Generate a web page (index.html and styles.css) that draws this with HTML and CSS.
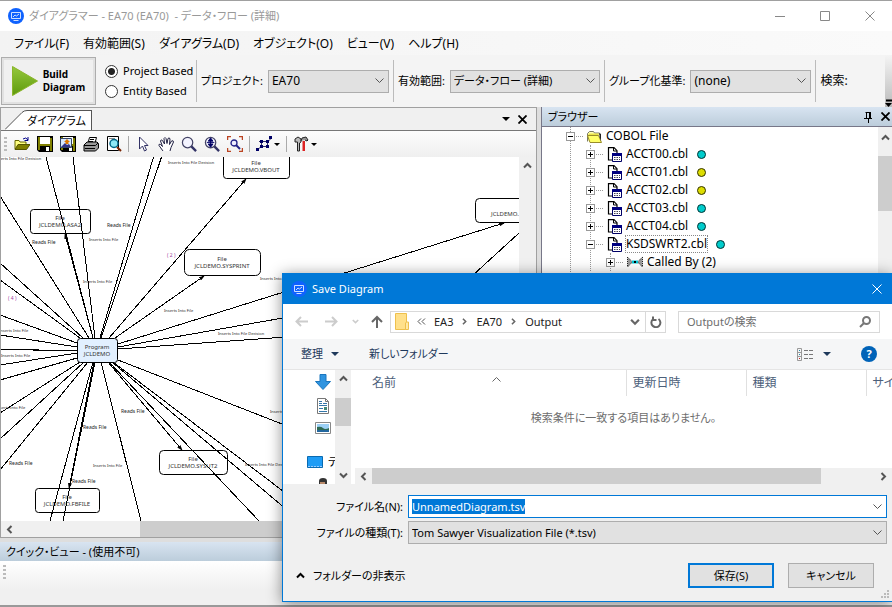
FILE: index.html
```html
<!DOCTYPE html>
<html lang="ja">
<head>
<meta charset="UTF-8">
<meta name="viewport" content="width=device-width,initial-scale=1">
<title>ダイアグラマー - EA70</title>
<link rel="stylesheet" href="styles.css">
</head>
<body>

<!-- 共通アイコン -->
<svg class="defs" width="0" height="0" aria-hidden="true">
  <symbol id="i-app" viewBox="0 0 16 16">
    <circle cx="8" cy="8" r="8" fill="#0f62fe"/>
    <path d="M3.5 4.500h9v6h-9zM5.500 12.500h5M5 9l2-2 1.500 1L11 6" fill="none" stroke="#cfe0ff"/>
  </symbol>
  <symbol id="i-x" viewBox="0 0 10 10"><path d="M0.500 0.500l9 9M9.500 0.500l-9 9" fill="none" stroke="currentColor" stroke-width="var(--sw,1)"/></symbol>
  <symbol id="i-up" viewBox="0 0 9 9"><path d="M1 6.500L4.500 3 8 6.500" fill="none" stroke="currentColor" stroke-width="2"/></symbol>
  <symbol id="i-down" viewBox="0 0 9 9"><path d="M1 2.500L4.500 6 8 2.500" fill="none" stroke="currentColor" stroke-width="2"/></symbol>
  <symbol id="i-left" viewBox="0 0 9 9"><path d="M6.500 1L3 4.500 6.500 8" fill="none" stroke="currentColor" stroke-width="2"/></symbol>
  <symbol id="i-right" viewBox="0 0 9 9"><path d="M2.500 1L6 4.500 2.500 8" fill="none" stroke="currentColor" stroke-width="2"/></symbol>
  <symbol id="i-tri" viewBox="0 0 8 4"><path d="M0 0h8L4 4z" fill="currentColor"/></symbol>
  <symbol id="i-doc" viewBox="0 0 15 15">
    <path d="M1.500 0.700h5.500l3 3V13h-8.500z" fill="#fff" stroke="#000" stroke-width="1.200"/>
    <path d="M6.500 1v3h3.500" fill="none" stroke="#000"/>
    <path d="M5.500 6.500h9v8h-9z" fill="#fff" stroke="#000066"/>
    <path d="M5 6h10v3H5z" fill="#000080"/>
    <path d="M7 10.500h6M7 12.500h6" stroke="#445" stroke-dasharray="1.500 1"/>
  </symbol>
  <symbol id="i-floppy" viewBox="0 0 16 16">
    <path d="M0 0h16v16H2L0 14z" fill="#000"/>
    <path d="M1 1h2v13H1zM13 2h2v13h-2z" fill="#808000"/>
    <path d="M3 1h10v7H3z" fill="#fff"/><path d="M1 8h14v2H1z" fill="#808000"/>
    <path d="M9 11h3v4H9z" fill="#fff"/>
  </symbol>
  <symbol id="i-lens" viewBox="0 0 17 17">
    <circle cx="7" cy="7" r="5.500" fill="#f4f4ff" stroke="#446" stroke-width="1.300"/>
    <path d="M11 11l5 5" stroke="#336" stroke-width="2.500"/>
  </symbol>
</svg>

<!-- ===== タイトルバー ===== -->
<header class="titlebar">
  <svg class="app-icon"><use href="#i-app"/></svg>
  <h1>ダイアグラマー - EA70 (EA70) &nbsp;- データ・フロー (詳細)</h1>
  <div class="winbtns">
    <button aria-label="最小化"><svg width="10" height="10"><path d="M0 5.500h10" stroke="currentColor"/></svg></button>
    <button aria-label="最大化"><svg width="10" height="10"><path d="M.5.5h9v9h-9z" fill="none" stroke="currentColor"/></svg></button>
    <button aria-label="閉じる"><svg width="10" height="10"><use href="#i-x"/></svg></button>
  </div>
</header>

<nav class="menubar">
  <button>ファイル(F)</button>
  <button>有効範囲(S)</button>
  <button>ダイアグラム(D)</button>
  <button>オブジェクト(O)</button>
  <button>ビュー(V)</button>
  <button>ヘルプ(H)</button>
</nav>

<!-- ===== メインツールバー ===== -->
<div class="toolbar">
  <button class="build">
    <svg width="26" height="30" viewBox="0 0 26 30"><defs><linearGradient id="g" x2="0" y2="1"><stop stop-color="#94c83d"/><stop offset="1" stop-color="#5f9a0c"/></linearGradient></defs><path d="M.5.5L25.500 15 .5 29.500z" fill="url(#g)" stroke="#8ab52a"/></svg>
    <span>Build<br>Diagram</span>
  </button>
  <div class="radios">
    <label><input type="radio" name="base" checked>Project Based</label>
    <label><input type="radio" name="base">Entity Based</label>
  </div>
  <div class="field f-mid"><label for="project">プロジェクト:</label><select id="project"><option>EA70</option></select></div>
  <div class="field f-wide"><label for="scope">有効範囲:</label><select id="scope"><option>データ・フロー (詳細)</option></select></div>
  <div class="field f-mid"><label for="group">グループ化基準:</label><select id="group"><option>(none)</option></select></div>
  <div class="field last"><span>検索:</span></div>
  <button class="more" aria-label="その他"><svg width="7" height="8"><path d="M1 1.500h6" stroke="#000" stroke-width="2"/><path d="M0 4h7L3.500 8z"/></svg></button>
</div>

<main class="workspace">
  <!-- ===== ダイアグラム ===== -->
  <section class="diagram">
    <div class="tabstrip">
      <svg class="slope" width="22" height="20"><path d="M0 19.500L17 2.500Q19 .5 22 .5V20H0z" fill="#fff"/><path d="M0 19.500L17 2.500Q19 .5 22 .5" fill="none" stroke="#555"/></svg>
      <button class="tab">ダイアグラム</button>
      <div class="strip-btns">
        <button aria-label="一覧"><svg width="8" height="4"><use href="#i-tri"/></svg></button>
        <button aria-label="タブを閉じる"><svg class="bold" width="9" height="9"><use href="#i-x"/></svg></button>
      </div>
    </div>
    <div class="tools">
      <i class="grip"></i>
      <button aria-label="開く"><svg viewBox="0 0 16 16"><path d="M1 4.500h4l1 1.500h6v7H1z" fill="#ffff80" stroke="#660"/><path d="M1 13.500L4 8.500h12l-3.500 5z" fill="#808000" stroke="#550"/><path d="M9 3q3-2.500 5 1m0-3v3.500h-3.500" fill="none" stroke="#008"/></svg></button>
      <button aria-label="保存"><svg><use href="#i-floppy"/></svg></button>
      <button aria-label="画像として保存"><svg viewBox="0 0 16 16"><use href="#i-floppy" width="16" height="16"/><path d="M.5 2.500h11v9H.5z" fill="#d7e8ff" stroke="#346"/><path d="M1 11l4-4 2 2 2-1 2 3z" fill="#338"/><path d="M7 3l3 3H8.500v2h-3V6H4z" fill="#d70"/></svg></button>
      <button aria-label="印刷"><svg viewBox="0 0 16 16"><path d="M5 7l1.500-5.500h7L12 7z" fill="#fff" stroke="#000"/><path d="M1 9l3-3h10l1.500 1.500V12l-3 3H1z" fill="#999" stroke="#000"/><path d="M1 9.500h11.500L15 7M2 12.500h10M7 3.500h4M6 5.500h4" fill="none" stroke="#000"/></svg></button>
      <button aria-label="印刷プレビュー"><svg viewBox="0 0 16 16"><path d="M1.500.5h11v14h-11z" fill="#fff" stroke="#000"/><path d="M3 2.500h6" stroke="#888"/><circle cx="8" cy="7.500" r="4" fill="#8ee8f5" stroke="#068" stroke-width="1.500"/><path d="M11 11l4 4" stroke="#720" stroke-width="2"/></svg></button>
      <i class="sep"></i>
      <button aria-label="選択"><svg viewBox="0 0 16 16"><path d="M4.500 1v12l3-3 2 5 2-1-2-4.500h3.500z" fill="#fff" stroke="#336"/></svg></button>
      <button aria-label="手のひら"><svg viewBox="0 0 16 16"><path d="M5 15L1 9.500Q.5 7.500 2.500 8.500L4.500 10.500 2.500 5Q3 3 4.500 4.500L6.500 8 6 2.500Q7 .5 8 2.500L9 7.500 10 2.500Q11.500 1 12 3L11.500 8.500 13.500 5Q15.500 4 15.500 6L13 11.500 12 15" fill="#fff" stroke="#224"/></svg></button>
      <button aria-label="ズーム"><svg><use href="#i-lens"/></svg></button>
      <button aria-label="対話ズーム"><svg viewBox="0 0 17 17"><use href="#i-lens" width="17" height="17"/><path d="M7 2l2.500 3.500h-5zM7 12l2.500-3.500h-5zM7 5v4M3 7h8" fill="#006" stroke="#006"/></svg></button>
      <button aria-label="全体表示"><svg viewBox="0 0 16 16"><path d="M.5 4V.5H4M12 .5h3.500V4M.5 12v3.500H4M12 15.500h3.500V12" fill="none" stroke="#b42" stroke-width="1.500"/><circle cx="7" cy="7" r="3" fill="#eef" stroke="#228" stroke-width="1.300"/><path d="M9 9l4 4" stroke="#228" stroke-width="2"/></svg></button>
      <i class="sep"></i>
      <button class="drop" aria-label="レイアウト"><svg viewBox="0 0 16 16"><path d="M5.500 4v8M11.500 4v8M3 5.500h9l3-3M2 13.500l3-3h7" fill="none" stroke="#336"/><path d="M4 4h3v3H4zM10 4h3v3h-3zM4 9h3v3H4zM10 9h3v3h-3zM0 12h3v3H0zM13 0h3v3h-3z" fill="#006"/></svg><svg class="caret"><use href="#i-tri"/></svg></button>
      <i class="sep"></i>
      <button class="drop" aria-label="ツール"><svg viewBox="0 0 16 16"><path d="M2 6V3l3-2 3 2v3L6.500 7v8h-2V6z" fill="#bbb" stroke="#222"/><path d="M8 5l1-3 4-1 2 3-1 1-2-1" fill="#999" stroke="#222"/><path d="M9.500 5h2.500v10H9.500z" fill="#d22"/></svg><svg class="caret"><use href="#i-tri"/></svg></button>
    </div>
    <div class="canvas">
      <svg class="graph" viewBox="1 157 518 364" preserveAspectRatio="xMinYMin slice">
        <defs><marker id="arrow" viewBox="0 0 6 4" refX="5" refY="2" markerWidth="6" markerHeight="4" markerUnits="userSpaceOnUse" orient="auto"><path d="M0 0l6 2-6 2z"/></marker></defs>
        <g class="nodes">
          <rect x="30.500" y="209.500" width="60" height="24" rx="3"/>
          <rect x="223.500" y="153.500" width="66" height="25" rx="3"/>
          <rect x="184.500" y="249.500" width="76" height="26" rx="5"/>
          <rect x="475.500" y="198.500" width="68" height="24" rx="4"/>
          <rect x="159.500" y="450.500" width="68" height="24" rx="4"/>
          <rect x="35.500" y="488.500" width="64" height="24" rx="3"/>
        </g>
        <g class="names">
          <text x="60" y="220">File</text><text x="60" y="227">JCLDEMO.ASA2</text>
          <text x="256" y="165">File</text><text x="256" y="172">JCLDEMO.VBOUT</text>
          <text x="222" y="261">File</text><text x="222" y="268">JCLDEMO.SYSPRINT</text>
          <text class="start" x="491" y="216">JCLDEMO.</text>
          <text x="193" y="461">File</text><text x="193" y="468">JCLDEMO.SYSUT2</text>
          <text x="67" y="499">File</text><text x="67" y="506">JCLDEMO.FBFILE</text>
        </g>
        <path class="edges" d="M46 157L93 338M73 157L95 338M153.500 157L100 338M161.500 157L101 338M0 196L89 338M0 263L83 338M0 280L80 338M0 315L77 343M0 335L77 347M0 349L77 351M33 350.500H77M0 365L77 353M0 380L77 358M0 413L80 362M0 439L84 362M0 470L88 362M50 521L93 362M63 521L95 362M141 521L101 362M259 521L109 362M300 521L112 362M300 504L113 362M300 431L118 360M300 315L118 347M300 336L118 349M460 287L519 233"/>
        <g class="edges arrows">
          <path d="M93 338L65 234"/><path d="M109 338L246 179"/><path d="M115 338L204 276"/>
          <path d="M118 344L504 223"/><path d="M108 362L182 450"/><path d="M94 362L69 488"/>
        </g>
        <g class="rel">
          <text x="107" y="227">Reads File</text><text x="32" y="244">Reads File</text>
          <text x="121" y="413">Reads File</text><text x="83" y="429">Reads File</text>
          <text x="9" y="465">Reads File</text><text x="72" y="483">Reads File</text>
        </g>
        <g class="rel small">
          <text x="-5" y="160">Inserts Into File Decision</text><text x="168" y="164">Inserts Into File Decision</text>
          <text x="89" y="241">Inserts Into File</text><text x="83" y="283">Inserts Into File</text>
          <text x="164" y="312">Inserts Into File</text><text x="260" y="280">Inserts Into File</text>
          <text x="218" y="335">Inserts Into File Decision</text><text x="-1" y="332">Inserts Into File</text>
          <text x="1" y="357">Inserts Into File</text><text x="-4" y="409">Inserts Into File</text>
          <text x="270" y="413">Inserts Into File</text><text x="93" y="467">Inserts Into File</text>
          <text x="245" y="466">Inserts Into File Decision</text>
        </g>
        <g class="count"><text x="167" y="257">( 2 )</text><text x="8" y="300">( 4 )</text></g>
        <rect class="program" x="77.500" y="338.500" width="40" height="24" rx="3"/>
        <g class="names"><text x="97" y="349">Program</text><text x="97" y="356">JCLDEMO</text></g>
      </svg>
      <div class="vscroll"><button aria-label="上へ"><svg><use href="#i-up"/></svg></button></div>
    </div>
    <div class="hscroll"><button aria-label="左へ"><svg><use href="#i-left"/></svg></button><i class="thumb"></i></div>
  </section>

  <!-- ===== ブラウザー ===== -->
  <section class="browser">
    <div class="panel-head"><h2>ブラウザー</h2>
      <button aria-label="固定"><svg width="9" height="12"><path d="M2.500 1v6M1.500 1.500h5M6 1v6M0 7.500h8M4.500 8v4" fill="none" stroke="#000"/><path d="M5 1h2v6H5z"/></svg></button>
      <button aria-label="ブラウザーを閉じる"><svg class="bold" width="9" height="9"><use href="#i-x"/></svg></button>
    </div>
    <div class="tree-wrap">
      <ul class="tree">
        <li><div class="row"><i class="exp open"></i>
          <svg class="folder" width="15" height="13" viewBox="0 0 15 13"><path d="M.5 11.500v-8l2-2h4l1 1.500h5v2" fill="#ffffb0" stroke="#776"/><path d="M1.500 3.500h10v3h-10z" fill="#e9e34a"/><path d="M3 12.500L.5 5.500h11l3 7z" fill="#ffff66" stroke="#998c2a"/><path d="M12.500 3v4l1.500 4V4z" fill="#222"/></svg>
          <span>COBOL File</span></div>
          <ul>
            <li><div class="row"><i class="exp"></i><svg class="doc"><use href="#i-doc"/></svg><span>ACCT00.cbl</span><i class="dot"></i></div></li>
            <li><div class="row"><i class="exp"></i><svg class="doc"><use href="#i-doc"/></svg><span>ACCT01.cbl</span><i class="dot yellow"></i></div></li>
            <li><div class="row"><i class="exp"></i><svg class="doc"><use href="#i-doc"/></svg><span>ACCT02.cbl</span><i class="dot yellow"></i></div></li>
            <li><div class="row"><i class="exp"></i><svg class="doc"><use href="#i-doc"/></svg><span>ACCT03.cbl</span><i class="dot"></i></div></li>
            <li><div class="row"><i class="exp"></i><svg class="doc"><use href="#i-doc"/></svg><span>ACCT04.cbl</span><i class="dot"></i></div></li>
            <li><div class="row"><i class="exp open"></i><svg class="doc"><use href="#i-doc"/></svg><span class="focus">KSDSWRT2.cbl</span><i class="dot"></i></div>
              <ul>
                <li><div class="row"><i class="exp"></i><svg class="rel-icon" width="16" height="12"><path d="M.5 1v10l5-5zM15.500 1v10l-5-5z" fill="#999" stroke="#222" stroke-dasharray="1 1"/><path d="M5 6h6" stroke="#00c8d8" stroke-width="3"/><path d="M7 6h2" stroke="#000" stroke-width="2"/></svg><span>Called By (2)</span></div></li>
              </ul>
            </li>
          </ul>
        </li>
      </ul>
      <div class="vscroll"><button aria-label="上へ"><svg><use href="#i-up"/></svg></button><i class="thumb"></i></div>
    </div>
  </section>
</main>

<section class="quickview">
  <div class="panel-head"><h2>クイック・ビュー - (使用不可)</h2></div>
  <div class="quick-body"><i class="grip"></i></div>
</section>

<!-- ===== 保存ダイアログ ===== -->
<form class="dialog" role="dialog" aria-label="Save Diagram">
  <div class="dlg-title">
    <svg class="app-icon"><use href="#i-app"/></svg><h2>Save Diagram</h2>
    <button type="button" aria-label="閉じる"><svg width="10" height="10"><use href="#i-x"/></svg></button>
  </div>
  <div class="dlg-nav">
    <button type="button" disabled aria-label="戻る"><svg width="13" height="11"><path d="M13 5.500H1M6 1L1.500 5.500 6 10" fill="none" stroke="currentColor" stroke-width="2"/></svg></button>
    <button type="button" disabled aria-label="進む"><svg width="13" height="11"><path d="M0 5.500h12M7 1l4.500 4.500L7 10" fill="none" stroke="currentColor" stroke-width="2"/></svg></button>
    <button type="button" disabled aria-label="履歴"><svg width="7" height="7"><use href="#i-down"/></svg></button>
    <button type="button" class="go-up" aria-label="上へ"><svg width="12" height="13"><path d="M6 13V2M1 7l5-5 5 5" fill="none" stroke="currentColor" stroke-width="2"/></svg></button>
    <div class="path">
      <svg width="14" height="17"><path d="M.5.5h11v16H.5z" fill="#ffe08a" stroke="#eec04c"/><path d="M11.500 9h2v7.500h-3V10z" fill="#ffe9a6" stroke="#eec04c"/></svg>
      <svg width="9" height="7"><path d="M4 .5l-3 3 3 3M8 .5l-3 3 3 3" fill="none" stroke="#555"/></svg>
      <button type="button">EA3</button><svg width="7" height="7"><use href="#i-right"/></svg>
      <button type="button">EA70</button><svg width="7" height="7"><use href="#i-right"/></svg>
      <button type="button">Output</button>
      <button type="button" class="hist" aria-label="以前の場所"><svg width="10" height="10"><use href="#i-down"/></svg></button>
      <button type="button" class="reload" aria-label="更新"><svg width="12" height="12"><path d="M3 3.200A4.500 4.500 0 1 0 8.500 3M3 .5V4h3.500" fill="none" stroke="currentColor" stroke-width="2"/></svg></button>
    </div>
    <div class="search">
      <input type="text" placeholder="Outputの検索" aria-label="Outputの検索">
      <svg width="12" height="12"><circle cx="7.500" cy="4.500" r="3.500" fill="none" stroke="#777" stroke-width="2"/><path d="M5 7L1 11" stroke="#777" stroke-width="2"/></svg>
    </div>
  </div>
  <div class="dlg-cmd">
    <button type="button">整理 <svg width="8" height="4"><use href="#i-tri"/></svg></button>
    <button type="button">新しいフォルダー</button>
    <button type="button" class="view" aria-label="表示方法"><svg width="17" height="13"><path d="M.5.500h4v12h-4zM.5 4.500h4M.5 8.500h4" fill="none" stroke="#999"/><path d="M7 2.500h4M12 2.500h4M7 6.500h4M12 6.500h4M7 10.500h4M12 10.500h4" stroke="#777"/><path d="M2 2h1v1H2zM2 6h1v1H2z" fill="#28a"/><path d="M2 10h1v1H2z" fill="#c22"/></svg><svg width="8" height="4"><use href="#i-tri"/></svg></button>
    <button type="button" class="help" aria-label="ヘルプ">?</button>
  </div>
  <div class="dlg-main">
    <div class="places">
      <svg width="16" height="16"><path d="M5 .5h6v7h4.500L8 15.500.5 7.500H5z" fill="#2f94e0" stroke="#1b76be"/></svg>
      <svg width="12" height="16"><path d="M.5.500h8l3 3v12H.5z" fill="#fff" stroke="#777"/><path d="M8.500.500v3h3" fill="none" stroke="#777"/><path d="M2 5.500h3M6 5.500h4M2 7.500h8M2 10.500h4M2 13.500h8M2 3.500h3" stroke="#37a"/><path d="M7 9h3v3H7z" fill="#487"/></svg>
      <svg width="16" height="12"><path d="M.5.500h15v11H.5z" fill="#fff" stroke="#888"/><path d="M2 2h12v8H2z" fill="#9cd0f5"/><path d="M2 5q4-1 6 1t6 0v2H2z" fill="#2f6a54"/><path d="M2 8h12v2H2z" fill="#23679e"/></svg>
      <div class="desktop"><svg width="16" height="12"><path d="M.5.500h15v11H.5z" fill="#1e9cf5" stroke="#0a6ab0"/><path d="M1 10.500h14" stroke="#9cf" stroke-dasharray="2 1"/></svg><span>デスクトップ</span></div>
      <svg class="user" width="10" height="6"><path d="M1 6V3q0-3 4-3t4 3v3z" fill="#333"/><path d="M2 4h5v2H2z" fill="#b98a6a"/></svg>
    </div>
    <div class="vscroll"><button type="button" aria-label="上へ"><svg><use href="#i-up"/></svg></button><i class="thumb"></i><button type="button" aria-label="下へ"><svg><use href="#i-down"/></svg></button></div>
    <div class="files">
      <table>
        <thead><tr><th class="name"><div class="sorted"><span>名前</span><svg width="9" height="9" viewBox="0 0 9 9"><path d="M.5 6.500l4-4 4 4" fill="none" stroke="#666"/></svg></div></th><th>更新日時</th><th>種類</th><th class="size">サイズ</th></tr></thead>
      </table>
      <p>検索条件に一致する項目はありません。</p>
      <div class="hscroll"><button type="button" aria-label="左へ"><svg><use href="#i-left"/></svg></button><i class="thumb"></i><button type="button" aria-label="右へ"><svg><use href="#i-right"/></svg></button></div>
    </div>
  </div>
  <div class="dlg-form">
    <label for="fname">ファイル名(N):</label>
    <div class="fname"><input type="text" id="fname" value="UnnamedDiagram.tsv"></div>
    <label for="ftype">ファイルの種類(T):</label>
    <select id="ftype"><option>Tom Sawyer Visualization File (*.tsv)</option></select>
  </div>
  <div class="dlg-foot">
    <button type="button" class="hide"><svg width="9" height="9"><use href="#i-up"/></svg>フォルダーの非表示</button>
    <button type="button" class="btn primary">保存(S)</button>
    <button type="button" class="btn">キャンセル</button>
  </div>
  <svg class="resize" width="8" height="8"><path d="M6 0h2v2H6zM3 3h2v2H3zM6 3h2v2H6zM0 6h2v2H0zM3 6h2v2H3zM6 6h2v2H6z" fill="#bbb"/></svg>
</form>

<script>
const fname=document.getElementById('fname');
fname.focus();
fname.select();
</script>
</body>
</html>
```
FILE: styles.css
```css
:root{
  --ui:"Noto Sans","Noto Sans CJK JP",sans-serif;
  --blue:#0078d7;--line:#a0a0a0;--thumb:#cdcdcd;--face:#f0f0f0;
  --chevron:url("data:image/svg+xml,%3Csvg xmlns='http://www.w3.org/2000/svg' width='9' height='6'%3E%3Cpath d='M.5 .5l4 4 4-4' fill='none' stroke='%23555'/%3E%3C/svg%3E");
}
*{box-sizing:border-box;margin:0;padding:0}
html,body{height:100%}
body{display:flex;flex-direction:column;position:relative;overflow:hidden;
     font:12px/16px var(--ui);font-feature-settings:"palt";background:var(--face);color:#000;
     border-top:1px solid var(--line)}
button,input,select{font:inherit;font-feature-settings:inherit;color:inherit}
button{border:0;background:none;display:inline-flex;align-items:center;justify-content:center}
h1,h2{font-size:11px;font-weight:400;flex:1;white-space:nowrap}
svg{flex:none;display:block}
ul{list-style:none}
.defs{position:absolute}
.bold{--sw:2}

/* タイトルバー・メニュー */
.titlebar{display:flex;align-items:center;height:30px;padding-left:8px;background:#fff;color:#999}
.app-icon{width:16px;height:16px;margin-right:5px}
.winbtns{display:flex;color:#888}
.winbtns button{width:45px;height:30px}
.menubar{display:flex;gap:14px;height:24px;padding:1px 0 0 14px;background:linear-gradient(90deg,#f3f3f3,#fafafa)}

/* ツールバー */
.toolbar{display:flex;align-items:center;height:52px;padding-left:1px;background:#f4f4f4}
.build{width:95px;height:48px;gap:5px;border:1px solid #adadad;box-shadow:inset 0 0 0 2px #e1e1e1;
       background:var(--face);font:bold 10px/13px var(--ui);text-align:left}
.radios{display:flex;flex-direction:column;gap:4px;width:100px;padding-left:9px;font-size:11px;white-space:nowrap}
.radios label{display:flex;align-items:center;gap:5px}
.radios input{appearance:none;width:13px;height:13px;border:1px solid #333;border-radius:50%;background:#fff}
.radios input:checked{background:radial-gradient(circle,#222 0 3px,#fff 4px)}
.field{display:flex;align-items:center;gap:5px;height:42px;padding:0 4px;border-left:1px solid #bbb;white-space:nowrap}
.field label{font-size:11px}
.field select{height:23px}
.f-mid select{width:121px}
.f-wide select{width:150px}
.field.last{flex:1}
select{appearance:none;border:1px solid #adadad;padding:0 3px;border-radius:0;
       background:#e1e1e1 var(--chevron) no-repeat right 4px center}
#scope{font-size:11px}
.more{align-self:stretch;align-items:flex-end;width:7px;background:linear-gradient(#f4f4f4,#bbb)}

/* 作業領域 */
.workspace{flex:1;display:grid;grid-template-columns:537fr 351fr;gap:4px;min-height:0;padding-bottom:4px;background:#dedede}
.diagram{display:flex;flex-direction:column;min-width:0;min-height:0;border:1px solid var(--line)}
.tabstrip{display:flex;align-items:flex-end;height:23px;padding-left:4px;border-bottom:1px solid #777;background:var(--face)}
.tab{height:20px;padding-right:5px;border:solid #555;border-width:1px 1px 0 0;background:#fff;font-size:11px}
.strip-btns{display:flex;gap:8px;align-self:center;margin-left:auto;padding-right:9px}
.tools{display:flex;align-items:center;gap:7px;height:26px;padding-left:3px;background:linear-gradient(#fcfcfc,#efefef)}
.tools svg{width:16px;height:16px}
.tools .caret{width:6px;height:3px}
.drop{gap:2px}
.sep{width:1px;height:16px;margin:0 -1px;background:#aaa}
.grip{width:3px;height:15px;background:repeating-linear-gradient(#bbb 0 2px,transparent 2px 4px)}
.canvas{flex:1;display:flex;min-height:0;background:#fff}
.graph{flex:1;min-width:0;height:100%}
.vscroll{display:flex;flex-direction:column;flex:none;width:17px;background:var(--face);color:#555}
.vscroll button{height:17px}
.vscroll svg,.hscroll svg{width:9px;height:9px}
.thumb{background:var(--thumb)}
.hscroll{display:flex;flex:none;height:16px;background:var(--face);color:#555}
.hscroll button{width:17px}
.diagram>.hscroll .thumb{flex:1;margin-left:122px}

.nodes rect{fill:#fff;stroke:#000}
.program{fill:#e2f0ff;stroke:#000}
.edges{fill:none;stroke:#000;stroke-width:1;shape-rendering:crispEdges}
.arrows path{marker-end:url(#arrow)}
.names{font:6px "Noto Sans",sans-serif;text-anchor:middle;fill:#333}
.start{text-anchor:start}
.rel{font:5px "Noto Sans",sans-serif;fill:#222}
.small{font-size:4px}
.count{font:5px "Noto Sans",sans-serif;fill:#a040a0}

/* ブラウザー */
.panel-head{display:flex;align-items:center;gap:8px;flex:none;height:19px;padding:0 2px 0 6px;background:linear-gradient(#d8e4f1,#bccddb)}
.browser{display:flex;flex-direction:column;min-width:0;border-left:1px solid #778}
.tree-wrap{flex:1;display:flex;justify-content:space-between;min-height:0;overflow:hidden;border-top:1px solid #778;background:#fff}
.tree-wrap .vscroll{width:14px}
.tree-wrap .vscroll button{height:20px}
.tree-wrap .vscroll .thumb{height:55px;margin-top:9px}
.tree{margin-left:28px}
.tree,.tree ul{border-left:1px dotted #999}
.tree ul{margin-left:19px}
.row{display:flex;align-items:center;height:18px;margin-left:-5px;white-space:nowrap;
     background:repeating-linear-gradient(90deg,#999 0 1px,transparent 1px 2px) 10px center/7px 1px no-repeat}
.exp{width:9px;height:9px;margin-right:12px;border:1px solid #999;flex:none;
     background:linear-gradient(#000,#000) center/5px 1px no-repeat,linear-gradient(#000,#000) center/1px 5px no-repeat,#fff}
.exp.open{background:linear-gradient(#000,#000) center/5px 1px no-repeat,#fff}
.tree svg{margin-right:4px}
.doc{width:15px;height:15px}
.dot{width:9px;height:9px;margin-left:9px;border:1px solid #033;border-radius:50%;background:#0cc}
.dot.yellow{border-color:#330;background:#dd0}
.focus{outline:1px dotted #888}

.quickview{flex:none;height:65px;border-bottom:2px solid #999;background:var(--face)}
.quick-body{height:44px;padding:4px 3px;background:linear-gradient(#fff,var(--face) 28px)}
.quick-body .grip{display:block}

/* 保存ダイアログ */
.dialog{position:absolute;left:282px;right:0;top:272px;background:var(--face);font-size:11px;
        border:1px solid var(--blue);border-right:0;box-shadow:0 2px 14px rgba(0,0,0,.45)}
.dlg-title{display:flex;align-items:center;height:30px;padding:0 10px 0 8px;background:var(--blue);color:#fff}
.dlg-nav{display:flex;align-items:center;height:35px;padding:0 12px;background:#fff;color:#666}
.dlg-nav>button{margin-right:17px}
.dlg-nav>button:nth-child(2){margin-right:14px}
.dlg-nav>button:nth-child(3){margin-right:12px}
.dlg-nav>.go-up{margin-right:7px}
.dlg-nav button:disabled{color:#ccc}
.path{flex:1;display:flex;align-items:center;gap:8px;height:22px;padding-left:4px;border:1px solid #d9d9d9}
.path button{color:#222}
.path .hist{margin-left:auto;color:#666}
.path .reload{align-self:stretch;width:20px;margin-left:-3px;border-left:1px solid #d9d9d9;color:#666}
.search{flex:0 1 202px;display:flex;align-items:center;height:22px;margin-left:12px;padding:0 8px;border:1px solid #d9d9d9}
.search input{flex:1;min-width:0;border:0;outline:0;background:none}
.search input::placeholder{color:#6d6d6d}
.dlg-cmd{display:flex;align-items:center;gap:30px;height:31px;padding:0 15px 0 18px;border-bottom:1px solid #e5e5e5;background:#f5f6f7;color:#1e395b}
.dlg-cmd button{gap:8px}
.dlg-cmd .view{gap:9px;margin-left:auto}
.dlg-cmd .help{width:16px;height:16px;border-radius:50%;background:#0063b8;color:#fff;font-weight:700}
.dlg-main{display:flex;height:114px;background:#fff}
.places{flex:none;width:52px;height:114px;overflow:hidden;display:flex;flex-direction:column;align-items:center;gap:8px;padding:4px 0 0 28px}
.desktop{display:flex;gap:5px;align-self:flex-start;align-items:center;margin:12px 0 0 -4px;white-space:nowrap}
.dlg-main .vscroll{width:16px}
.dlg-main .vscroll .thumb{height:28px;margin:11px 0 auto}
.files{flex:1;display:flex;flex-direction:column;min-width:0;overflow:hidden;margin-left:4px}
table{width:100%;table-layout:fixed;border-collapse:collapse;font-size:12px}
th{width:120px;height:26px;padding:0 6px;border-right:1px solid #e0e0e0;color:#4c607a;font-weight:400;text-align:left;white-space:nowrap}
th.name{width:auto;padding-left:17px}
th.size{width:26px;border-right:0;overflow:hidden}
.sorted{display:flex;gap:96px;align-items:center}
.sorted svg{align-self:flex-start}
.files p{flex:1;padding-top:14px;text-align:center;color:#6d6d6d}
.files .thumb{flex:1;margin-right:54px}
.dlg-form{display:grid;grid-template-columns:120px 1fr;gap:3px 5px;align-items:center;padding:11px 5px 0 0}
.dlg-form label{text-align:right}
.dlg-form select{height:23px}
.fname{height:23px;padding:0 20px 0 3px;border:1px solid var(--blue);
       background:#fff var(--chevron) no-repeat right 4px center}
.fname input{width:100%;height:21px;border:0;outline:0;background:none}
.fname input::selection{background:var(--blue);color:#fff}
.dlg-foot{display:flex;align-items:center;gap:14px;padding:19px 18px 13px 13px}
.hide{gap:8px;margin-right:auto}
.btn{width:86px;height:25px;border:1px solid #adadad;background:#e1e1e1}
.btn.primary{border:2px solid var(--blue)}
.resize{position:absolute;right:3px;bottom:3px}
```
